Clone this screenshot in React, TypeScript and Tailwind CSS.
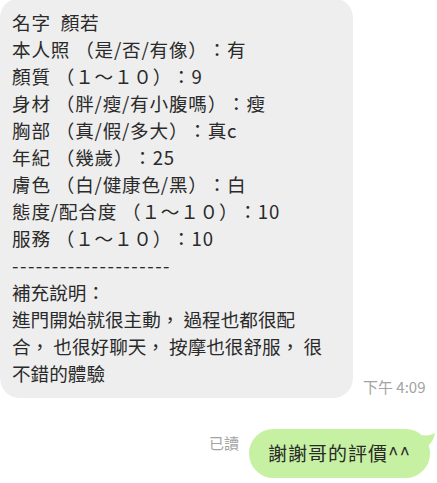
const lines = [
  "名字  顏若",
  "本人照 （是/否/有像）：有",
  "顏質 （１～１０）：9",
  "身材 （胖/瘦/有小腹嗎）：瘦",
  "胸部 （真/假/多大）：真c",
  "年紀 （幾歲）：25",
  "膚色 （白/健康色/黑）：白",
  "態度/配合度 （１～１０）：10",
  "服務 （１～１０）：10",
];

const notes = [
  "補充說明：",
  "進門開始就很主動， 過程也都很配",
  "合， 也很好聊天， 按摩也很舒服， 很",
  "不錯的體驗",
];

export default function App() {
  return (
    <div className="w-[437px] h-[483px] bg-white overflow-hidden font-['Noto_Sans_CJK_TC',sans-serif] [text-spacing-trim:space-all]">
      {/* incoming message */}
      <div className="flex items-end gap-[10px] mt-[-2px]">
        <div className="w-[353px] bg-[#eeeeee] rounded-[20px] pl-[12px] pt-[10px] pb-[12px] text-[18.6px] leading-[27px] text-[#2a2a2a]">
          {lines.map((l) => (
            <div key={l} className="whitespace-pre tracking-[0.8px]">{l}</div>
          ))}
          <div className="tracking-[1.5px]">--------------------</div>
          {notes.map((l) => (
            <div key={l} className="whitespace-pre">{l}</div>
          ))}
        </div>
        <div className="text-[15px] leading-[18px] text-[#a3a3a3] pb-[2px]">下午 4:09</div>
      </div>

      {/* outgoing message */}
      <div className="flex justify-end items-start mt-[31px] mr-[7px] gap-[10px]">
        <div className="text-[15px] leading-[18px] text-[#a3a3a3] pt-[5px]">已讀</div>
        <div className="relative">
          <div className="h-[49px] bg-[#c6f0a2] rounded-full pl-[19px] pr-[19px] flex items-center text-[19px] tracking-[1px] text-[#2a2a2a]">
            謝謝哥的評價^^
          </div>
          <svg className="absolute right-[-8px] top-[4px]" width="16" height="16" viewBox="0 0 16 16">
            <path d="M0 2 C5 3 9 2 13 0 C12 5 10 10 4 15 Z" fill="#c6f0a2" />
          </svg>
        </div>
      </div>
    </div>
  );
}
